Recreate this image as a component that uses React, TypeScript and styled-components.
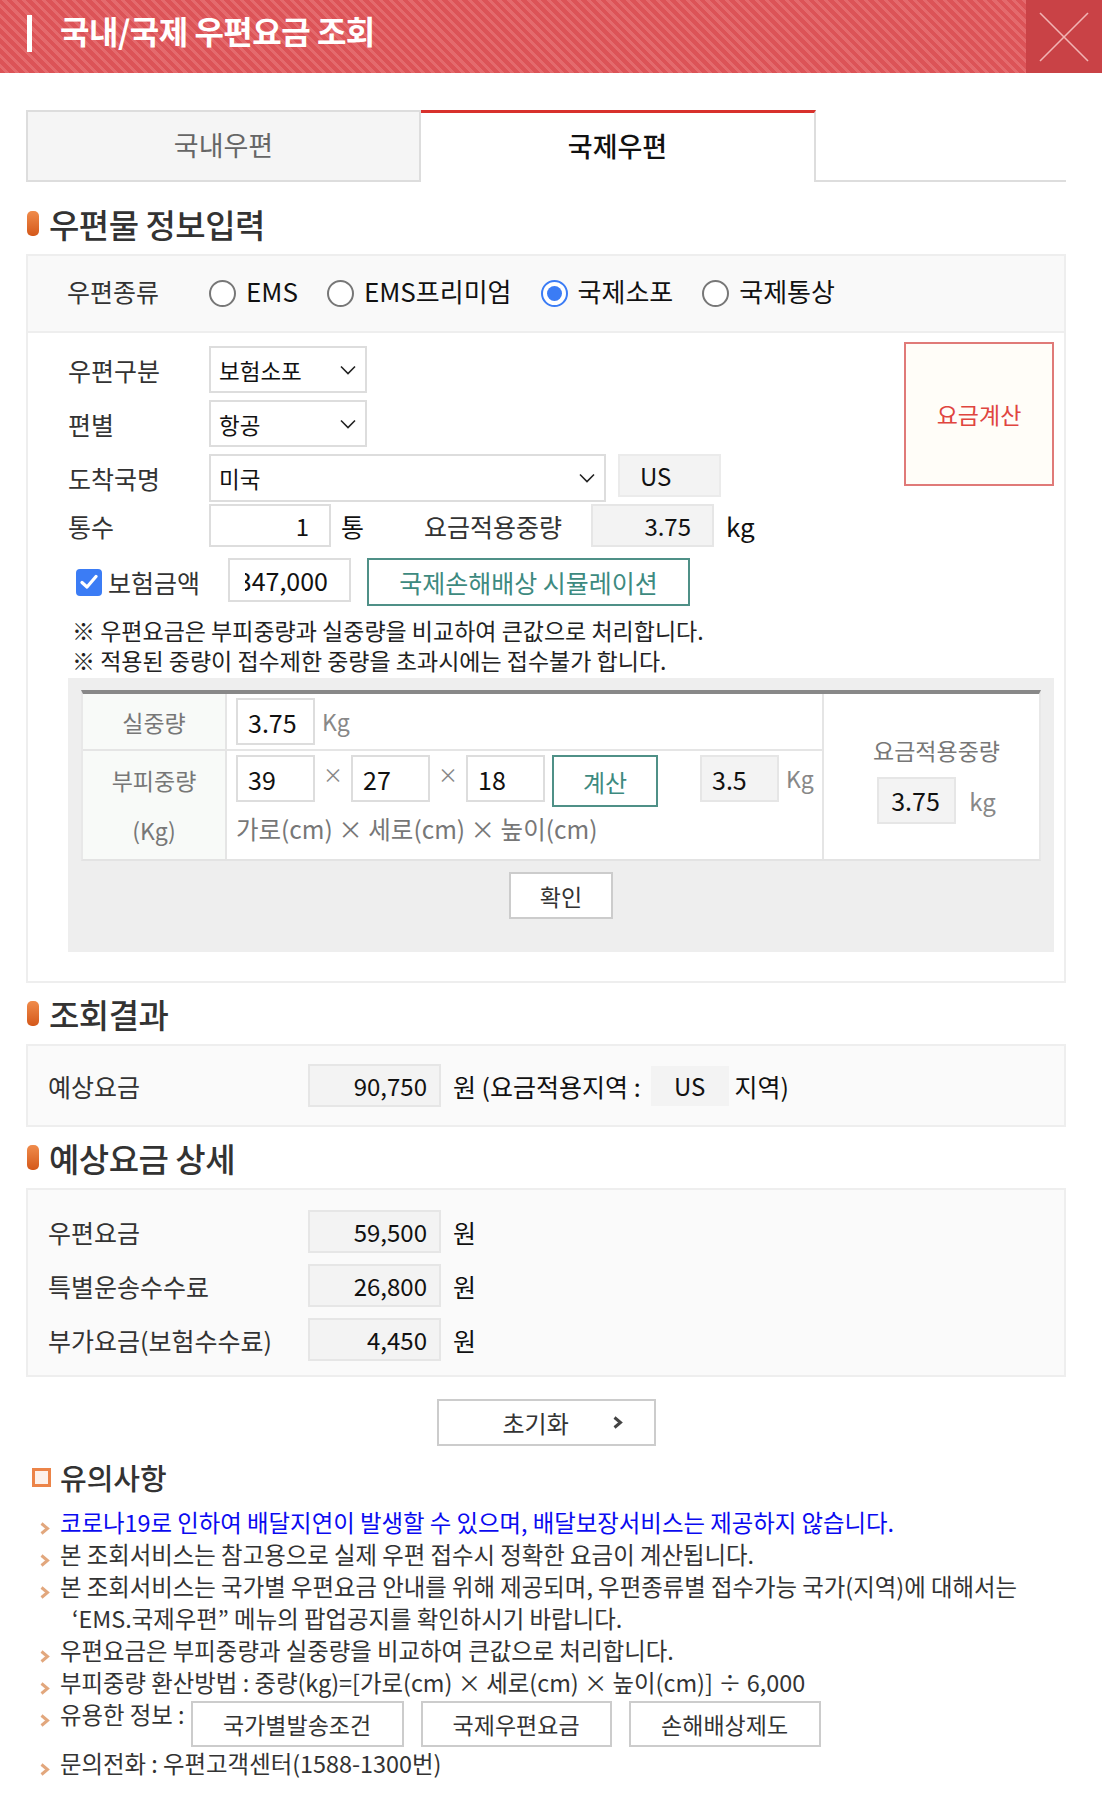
import styled, { createGlobalStyle, css } from 'styled-components';

const GlobalStyle = createGlobalStyle`
    html, body {
        margin: 0;
        padding: 0;
        background: #fff;
    }
    body {
        font-family: "Noto Sans CJK KR", "Noto Sans", sans-serif;
        color: #333;
    }
    * {
        box-sizing: border-box;
    }
`

const Header = styled.header`
    height: 73px;
    display: flex;
    align-items: center;
    background: repeating-linear-gradient(45deg, #dc5357 0 4px, #e46a6d 4px 7px);
`

const TitleBar = styled.span`
    width: 5px;
    height: 37px;
    background: #fff;
    margin: 0 28px 6px 27px;
`

const Title = styled.h1`
    flex: 1;
    margin: 0 0 14px;
    font-size: 32px;
    font-weight: 700;
    color: #fff;
    letter-spacing: -0.5px;
`

const CloseButton = styled.button`
    width: 76px;
    height: 73px;
    border: none;
    padding: 0;
    background: #c94246;
    display: flex;
    align-items: center;
    justify-content: center;
`

const Main = styled.main`
    padding: 0 36px 40px 26px;
`

const Tabs = styled.div`
    display: flex;
    margin-top: 37px;
    height: 72px;
`

const Tab = styled.div<{ $active?: boolean }>`
    width: 395px;
    display: flex;
    align-items: center;
    justify-content: center;
    font-size: 27px;
    padding-bottom: 4px;
    ${({ $active }) => $active ? css`
        background: #fff;
        color: #111;
        font-weight: 500;
        border-top: 3px solid #d8312c;
        border-right: 2px solid #ddd;
    ` : css`
        background: #f5f5f5;
        color: #666;
        border: 2px solid #ddd;
    `}
`

const TabFill = styled.div`
    flex: 1;
    border-bottom: 2px solid #ddd;
`

const SectionTitle = styled.h2<{ $top?: number }>`
    margin: ${({ $top }) => $top ?? 0}px 0 0;
    height: 61px;
    display: flex;
    align-items: center;
    font-size: 33px;
    font-weight: 500;
    color: #333;
    letter-spacing: -0.5px;

    &::before {
        content: "";
        width: 12px;
        height: 25px;
        margin-left: 1px;
        margin-right: 10px;
        border-radius: 5px;
        background: linear-gradient(#f08c4c, #d4581a);
    }
`

const Panel = styled.div<{ $bg?: string }>`
    border: 2px solid #eee;
    background: ${({ $bg }) => $bg ?? '#fafafa'};
`

const KindRow = styled.div`
    height: 77px;
    display: flex;
    align-items: center;
    padding-left: 39px;
    padding-bottom: 6px;
    background: #f9f9f9;
    border-bottom: 2px solid #eee;
`

const Label = styled.span<{ $w?: number }>`
    width: ${({ $w }) => $w ?? 141}px;
    flex-shrink: 0;
    font-size: 25px;
    color: #333;
`

const Option = styled.label`
    display: flex;
    align-items: center;
    gap: 10px;
    margin-right: 29px;
    font-size: 26px;
    color: #111;
`

const Radio = styled.span<{ $checked?: boolean }>`
    width: 27px;
    height: 27px;
    margin-top: 5px;
    border-radius: 50%;
    border: 2px solid ${({ $checked }) => $checked ? '#3b7cf5' : '#777'};
    background: #fff;
    display: flex;
    align-items: center;
    justify-content: center;

    ${({ $checked }) => $checked && css`
        &::after {
            content: "";
            width: 15px;
            height: 15px;
            border-radius: 50%;
            background: #3b7cf5;
        }
    `}
`

const FormBody = styled.div`
    padding: 13px 10px 29px 40px;
`

const FormTop = styled.div`
    display: flex;
    justify-content: space-between;
    align-items: flex-start;
`

const FieldColumn = styled.div`
    display: flex;
    flex-direction: column;
`

const Row = styled.div<{ $mt?: number }>`
    display: flex;
    align-items: center;
    margin-top: ${({ $mt }) => $mt ?? 0}px;
`

const SelectBox = styled.div<{ $w: number; $h?: number }>`
    width: ${({ $w }) => $w}px;
    height: ${({ $h }) => $h ?? 47}px;
    border: 2px solid #ddd;
    background: #fff;
    display: flex;
    align-items: center;
    justify-content: space-between;
    padding: 0 9px 0 8px;
    font-size: 22.5px;
    color: #111;
`

const Field = styled.div<{ $w: number; $h?: number; $gray?: boolean; $right?: boolean; $pad?: number; $fs?: number }>`
    width: ${({ $w }) => $w}px;
    height: ${({ $h }) => $h ?? 43}px;
    flex-shrink: 0;
    border: 2px solid ${({ $gray }) => $gray ? '#e6e6e6' : '#ddd'};
    background: ${({ $gray }) => $gray ? '#f3f3f3' : '#fff'};
    display: flex;
    align-items: center;
    justify-content: ${({ $right }) => $right ? 'flex-end' : 'flex-start'};
    padding: 0 ${({ $pad }) => $pad ?? 10}px;
    overflow: hidden;
    white-space: nowrap;
    font-size: ${({ $fs }) => $fs ?? 24}px;
    color: #111;
`

const ClipValue = styled.span`
    flex: 1;
    min-width: 0;
    display: flex;
    justify-content: flex-end;
    overflow: hidden;
`

const CodeBox = styled.div<{ $w: number; $h: number; $plain?: boolean }>`
    width: ${({ $w }) => $w}px;
    height: ${({ $h }) => $h}px;
    background: #f3f3f3;
    border: ${({ $plain }) => $plain ? 'none' : '2px solid #ebebeb'};
    display: flex;
    align-items: center;
    justify-content: ${({ $plain }) => $plain ? 'center' : 'flex-start'};
    padding-left: ${({ $plain }) => $plain ? 0 : 20}px;
    font-size: 24px;
    color: #111;
`

const Unit = styled.span<{ $ml?: number; $gray?: boolean; $fs?: number }>`
    margin-left: ${({ $ml }) => $ml ?? 10}px;
    font-size: ${({ $fs }) => $fs ?? 25}px;
    color: ${({ $gray }) => $gray ? '#888' : '#111'};
`

const CalcButton = styled.button`
    width: 150px;
    height: 144px;
    margin-top: -4px;
    border: 2px solid #e07a78;
    background: #fffdf8;
    color: #e0453f;
    font-family: inherit;
    font-size: 23px;
`

const CheckLabel = styled.label`
    width: 160px;
    display: flex;
    align-items: center;
    gap: 6px;
    padding-left: 8px;
    font-size: 25px;
    color: #333;
`

const CheckBox = styled.span`
    width: 26px;
    height: 27px;
    border-radius: 4px;
    background: #3b7cf5;
    display: flex;
    align-items: center;
    justify-content: center;
`

const OutlineButton = styled.button<{ $w: number; $h: number; $ml?: number }>`
    width: ${({ $w }) => $w}px;
    height: ${({ $h }) => $h}px;
    margin-left: ${({ $ml }) => $ml ?? 0}px;
    flex-shrink: 0;
    border: 2px solid #4f9087;
    background: #fff;
    color: #3d8a80;
    font-family: inherit;
    font-size: 25px;
    padding: 0;
`

const Notes = styled.div`
    margin: 9px 0 0 4px;
    font-size: 23px;
    line-height: 30px;
    color: #222;
`

const GrayBox = styled.div`
    margin-top: 3px;
    background: #eee;
    padding: 12px 13px 33px;
`

const CalcTable = styled.div`
    display: grid;
    grid-template-columns: 144px 595px 221px;
    grid-template-rows: 57px 108px;
    border-top: 4px solid #888;
    border-bottom: 2px solid #e3e3e3;
    border-left: 2px solid #e8e8e8;
    border-right: 2px solid #e8e8e8;
    background: #fff;
`

const HeadCell = styled.div<{ $line?: boolean }>`
    background: #f8faf8;
    border-right: 2px solid #e5e5e5;
    border-bottom: ${({ $line }) => $line ? '2px solid #e5e5e5' : 'none'};
    display: flex;
    flex-direction: column;
    align-items: center;
    justify-content: center;
    font-size: 23px;
    line-height: 50px;
    color: #777;
`

const BodyCell = styled.div<{ $line?: boolean }>`
    border-bottom: ${({ $line }) => $line ? '2px solid #e5e5e5' : 'none'};
    padding: 4px 0 0 9px;
`

const SideCell = styled.div`
    grid-column: 3;
    grid-row: 1 / span 2;
    border-left: 2px solid #e5e5e5;
    display: flex;
    flex-direction: column;
    align-items: center;
    justify-content: center;
    gap: 7px;
    padding-left: 6px;
`

const SideTitle = styled.span`
    font-size: 23px;
    line-height: 40px;
    color: #777;
`

const DimRow = styled.div`
    display: flex;
    align-items: flex-start;
`

const Times = styled.span`
    width: 36px;
    text-align: center;
    font-size: 20px;
    line-height: 40px;
    color: #888;
`

const TealButton = styled.button`
    width: 106px;
    height: 52px;
    margin-left: 7px;
    margin-right: 42px;
    border: 2px solid #4f9087;
    background: #fff;
    color: #3d8a80;
    font-family: inherit;
    font-size: 24px;
    padding: 0;
`

const Caption = styled.div`
    margin-top: 7px;
    font-size: 24.5px;
    line-height: 30px;
    color: #777;
`

const PlainButton = styled.button<{ $w: number; $h?: number; $fs?: number }>`
    width: ${({ $w }) => $w}px;
    height: ${({ $h }) => $h ?? 47}px;
    border: 2px solid #ccc;
    background: #fff;
    color: #333;
    font-family: inherit;
    font-size: ${({ $fs }) => $fs ?? 23}px;
    padding: 0;
`

const ConfirmWrap = styled.div`
    display: flex;
    justify-content: center;
    margin-top: 11px;
`

const ResultRow = styled.div<{ $mt?: number }>`
    display: flex;
    align-items: center;
    margin-top: ${({ $mt }) => $mt ?? 0}px;
    color: #111;
`

const ResultPanelBody = styled.div`
    height: 79px;
    display: flex;
    align-items: center;
    padding-left: 20px;
`

const DetailBody = styled.div`
    padding: 20px 0 14px 20px;
`

const ResetWrap = styled.div`
    display: flex;
    justify-content: center;
    margin-top: 22px;
`

const ResetButton = styled.button`
    width: 219px;
    height: 47px;
    border: 2px solid #ccc;
    background: #fff;
    display: flex;
    align-items: center;
    padding: 0 0 0 64px;
    font-family: inherit;
    font-size: 24px;
    color: #333;

    svg {
        margin-left: 44px;
    }
`

const NoticeTitle = styled.h3`
    margin: 0;
    height: 62px;
    display: flex;
    align-items: center;
    font-size: 29px;
    font-weight: 500;
    color: #333;

    &::before {
        content: "";
        width: 13px;
        height: 13px;
        margin-left: 6px;
        margin-right: 9px;
        border: 3px solid #ec8448;
        background: #fdf1ea;
    }
`

const NoticeList = styled.ul`
    list-style: none;
    margin: -2px 0 0;
    padding: 0;
`

const NoticeItem = styled.li<{ $blue?: boolean }>`
    display: flex;
    align-items: flex-start;
    font-size: 23.4px;
    line-height: 32px;
    color: ${({ $blue }) => $blue ? '#0a0af0' : '#333'};
`

const BulletCell = styled.span`
    width: 34px;
    height: 32px;
    flex-shrink: 0;
    display: flex;
    align-items: flex-start;
    padding: 16px 0 0 14px;

    svg {
        display: block;
    }
`

const Indent = styled.span`
    display: inline-block;
    margin-left: 12px;
`

const LinkButtons = styled.div`
    display: flex;
    gap: 17px;
    margin: 3px 0 0 6px;
`

const Chevron = ({ color = '#e2a77d' }: { color?: string }) => (
    <svg width="10" height="13" viewBox="0 0 10 13">
        <path d="M1.5 1.5 L7.5 6.5 L1.5 11.5" fill="none" stroke={color} strokeWidth="3" strokeLinejoin="miter" />
    </svg>
);

const DownArrow = () => (
    <svg width="16" height="10" viewBox="0 0 16 10">
        <polyline points="1,1.5 8,8.5 15,1.5" fill="none" stroke="#222" strokeWidth="1.6" />
    </svg>
);

const App = () => {
    return (
        <>
            <GlobalStyle />
            <Header>
                <TitleBar />
                <Title>국내/국제 우편요금 조회</Title>
                <CloseButton aria-label="닫기">
                    <svg width="50" height="50" viewBox="0 0 50 50">
                        <line x1="1" y1="1" x2="49" y2="49" stroke="#f2b4b4" strokeWidth="1.6" />
                        <line x1="49" y1="1" x2="1" y2="49" stroke="#f2b4b4" strokeWidth="1.6" />
                    </svg>
                </CloseButton>
            </Header>

            <Main>
                <Tabs>
                    <Tab>국내우편</Tab>
                    <Tab $active>국제우편</Tab>
                    <TabFill />
                </Tabs>

                <SectionTitle $top={11}>우편물 정보입력</SectionTitle>
                <Panel $bg="#fff">
                    <KindRow>
                        <Label $w={142}>우편종류</Label>
                        <Option><Radio />EMS</Option>
                        <Option><Radio />EMS프리미엄</Option>
                        <Option><Radio $checked />국제소포</Option>
                        <Option><Radio />국제통상</Option>
                    </KindRow>

                    <FormBody>
                        <FormTop>
                            <FieldColumn>
                                <Row>
                                    <Label>우편구분</Label>
                                    <SelectBox $w={158}>보험소포<DownArrow /></SelectBox>
                                </Row>
                                <Row $mt={7}>
                                    <Label>편별</Label>
                                    <SelectBox $w={158}>항공<DownArrow /></SelectBox>
                                </Row>
                                <Row $mt={7}>
                                    <Label>도착국명</Label>
                                    <SelectBox $w={397} $h={48}>미국<DownArrow /></SelectBox>
                                    <CodeBox $w={103} $h={43} style={{ marginLeft: 12, alignSelf: 'flex-start' }}>US</CodeBox>
                                </Row>
                                <Row $mt={2}>
                                    <Label>통수</Label>
                                    <Field $w={122} $right $pad={20}>1</Field>
                                    <Unit>통</Unit>
                                    <Label $w={167} style={{ marginLeft: 60 }}>요금적용중량</Label>
                                    <Field $w={123} $gray $right $pad={21}>3.75</Field>
                                    <Unit $ml={12} $fs={26}>kg</Unit>
                                </Row>
                                <Row $mt={11}>
                                    <CheckLabel>
                                        <CheckBox>
                                            <svg width="18" height="16" viewBox="0 0 18 16">
                                                <polyline points="2,8.5 7,13 16,2.5" fill="none" stroke="#fff" strokeWidth="3.2" strokeLinecap="round" strokeLinejoin="round" />
                                            </svg>
                                        </CheckBox>
                                        보험금액
                                    </CheckLabel>
                                    <Field $w={123} $h={44} $pad={21} $fs={25} style={{ alignSelf: 'flex-start', paddingLeft: 15 }}>
                                        <ClipValue>347,000</ClipValue>
                                    </Field>
                                    <OutlineButton $w={323} $h={48} $ml={16}>국제손해배상 시뮬레이션</OutlineButton>
                                </Row>
                            </FieldColumn>
                            <CalcButton>요금계산</CalcButton>
                        </FormTop>

                        <Notes>
                            <div>※ 우편요금은 부피중량과 실중량을 비교하여 큰값으로 처리합니다.</div>
                            <div>※ 적용된 중량이 접수제한 중량을 초과시에는 접수불가 합니다.</div>
                        </Notes>

                        <GrayBox>
                            <CalcTable>
                                <HeadCell $line>실중량</HeadCell>
                                <BodyCell $line>
                                    <DimRow>
                                        <Field $w={79} $h={47} $fs={25}>3.75</Field>
                                        <Unit $ml={7} $gray $fs={23} style={{ lineHeight: '47px' }}>Kg</Unit>
                                    </DimRow>
                                </BodyCell>
                                <SideCell>
                                    <SideTitle>요금적용중량</SideTitle>
                                    <DimRow>
                                        <Field $w={79} $h={47} $gray $pad={12} $fs={25}>3.75</Field>
                                        <Unit $ml={13} $gray $fs={24} style={{ lineHeight: '47px' }}>kg</Unit>
                                    </DimRow>
                                </SideCell>
                                <HeadCell>
                                    <span>부피중량</span>
                                    <span>(Kg)</span>
                                </HeadCell>
                                <BodyCell>
                                    <DimRow>
                                        <Field $w={79} $h={47} $fs={25}>39</Field>
                                        <Times>×</Times>
                                        <Field $w={79} $h={47} $fs={25}>27</Field>
                                        <Times>×</Times>
                                        <Field $w={79} $h={47} $fs={25}>18</Field>
                                        <TealButton>계산</TealButton>
                                        <Field $w={79} $h={47} $gray $fs={25}>3.5</Field>
                                        <Unit $ml={7} $gray $fs={23} style={{ lineHeight: '47px' }}>Kg</Unit>
                                    </DimRow>
                                    <Caption>가로(cm) × 세로(cm) × 높이(cm)</Caption>
                                </BodyCell>
                            </CalcTable>
                            <ConfirmWrap>
                                <PlainButton $w={104}>확인</PlainButton>
                            </ConfirmWrap>
                        </GrayBox>
                    </FormBody>
                </Panel>

                <SectionTitle>조회결과</SectionTitle>
                <Panel>
                    <ResultPanelBody>
                        <ResultRow>
                            <Label $w={260}>예상요금</Label>
                            <Field $w={133} $gray $right $pad={12}>90,750</Field>
                            <Unit $ml={12}>원 (요금적용지역 :</Unit>
                            <CodeBox $w={78} $h={40} $plain style={{ marginLeft: 10 }}>US</CodeBox>
                            <Unit $ml={6}>지역)</Unit>
                        </ResultRow>
                    </ResultPanelBody>
                </Panel>

                <SectionTitle>예상요금 상세</SectionTitle>
                <Panel>
                    <DetailBody>
                        <ResultRow>
                            <Label $w={260}>우편요금</Label>
                            <Field $w={133} $gray $right $pad={12}>59,500</Field>
                            <Unit $ml={12}>원</Unit>
                        </ResultRow>
                        <ResultRow $mt={11}>
                            <Label $w={260}>특별운송수수료</Label>
                            <Field $w={133} $gray $right $pad={12}>26,800</Field>
                            <Unit $ml={12}>원</Unit>
                        </ResultRow>
                        <ResultRow $mt={11}>
                            <Label $w={260}>부가요금(보험수수료)</Label>
                            <Field $w={133} $gray $right $pad={12}>4,450</Field>
                            <Unit $ml={12}>원</Unit>
                        </ResultRow>
                    </DetailBody>
                </Panel>

                <ResetWrap>
                    <ResetButton>
                        초기화
                        <Chevron color="#444" />
                    </ResetButton>
                </ResetWrap>

                <NoticeTitle>유의사항</NoticeTitle>
                <NoticeList>
                    <NoticeItem $blue>
                        <BulletCell><Chevron /></BulletCell>
                        <span>코로나19로 인하여 배달지연이 발생할 수 있으며, 배달보장서비스는 제공하지 않습니다.</span>
                    </NoticeItem>
                    <NoticeItem>
                        <BulletCell><Chevron /></BulletCell>
                        <span>본 조회서비스는 참고용으로 실제 우편 접수시 정확한 요금이 계산됩니다.</span>
                    </NoticeItem>
                    <NoticeItem>
                        <BulletCell><Chevron /></BulletCell>
                        <span>
                            본 조회서비스는 국가별 우편요금 안내를 위해 제공되며, 우편종류별 접수가능 국가(지역)에 대해서는
                            <br /><Indent>‘EMS.국제우편” 메뉴의 팝업공지를 확인하시기 바랍니다.</Indent>
                        </span>
                    </NoticeItem>
                    <NoticeItem>
                        <BulletCell><Chevron /></BulletCell>
                        <span>우편요금은 부피중량과 실중량을 비교하여 큰값으로 처리합니다.</span>
                    </NoticeItem>
                    <NoticeItem>
                        <BulletCell><Chevron /></BulletCell>
                        <span>부피중량 환산방법 : 중량(kg)=[가로(cm) × 세로(cm) × 높이(cm)] ÷ 6,000</span>
                    </NoticeItem>
                    <NoticeItem>
                        <BulletCell><Chevron /></BulletCell>
                        <span>유용한 정보 :</span>
                        <LinkButtons>
                            <PlainButton $w={213} $h={46}>국가별발송조건</PlainButton>
                            <PlainButton $w={191} $h={46}>국제우편요금</PlainButton>
                            <PlainButton $w={192} $h={46}>손해배상제도</PlainButton>
                        </LinkButtons>
                    </NoticeItem>
                    <NoticeItem>
                        <BulletCell><Chevron /></BulletCell>
                        <span>문의전화 : 우편고객센터(1588-1300번)</span>
                    </NoticeItem>
                </NoticeList>
            </Main>
        </>
    );
};

export default App;
